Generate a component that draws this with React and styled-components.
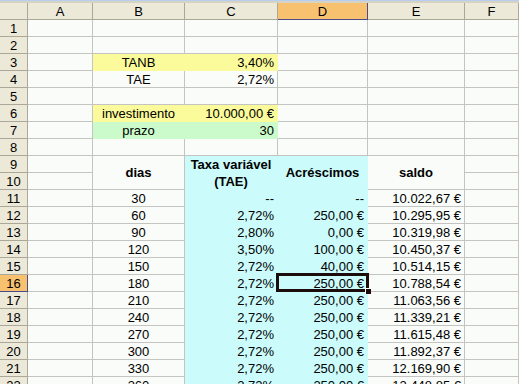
import React from 'react';
import styled, { createGlobalStyle, css } from 'styled-components';

const GlobalStyle = createGlobalStyle`
    html, body {
        margin: 0;
        padding: 0;
        background: #f9fcf9;
        overflow: hidden;
    }
`;

const Window = styled.div`
    width: 519px;
    height: 384px;
    overflow: hidden;
    font-family: 'Liberation Sans', Arial, sans-serif;
    font-size: 13px;
    color: #000;
    background: #f9fcf9;
`;

const TopStrip = styled.div`
    height: 3px;
    display: flex;
    background: #d6d3c4;
    border-top: 1px solid #b9cdee;
    box-sizing: border-box;
`;

const Sheet = styled.div`
    display: grid;
    grid-template-columns: 28px 65px 92px 93px 90px 97px 1fr;
    grid-auto-rows: 17px;
`;

const HeadCell = styled.div`
    box-sizing: border-box;
    display: flex;
    align-items: center;
    justify-content: center;
    background: ${(p) => (p.$selected ? '#f8c170' : '#ece9d8')};
    border-right: 1px solid ${(p) => (p.$selected ? '#4c4c8a' : '#aca899')};
    border-bottom: 1px solid ${(p) => (p.$selected ? '#4c4c8a' : '#aca899')};
    line-height: 16px;
    padding-top: 1px;
`;

const fills = {
    white: '#f9fcf9',
    yellow: '#fbfb9b',
    green: '#cbfbcb',
    cyan: '#cbfbfb',
};

const Cell = styled.div`
    position: relative;
    box-sizing: border-box;
    display: flex;
    align-items: center;
    justify-content: ${(p) =>
        p.$align === 'right' ? 'flex-end' : p.$align === 'center' ? 'center' : 'flex-start'};
    text-align: center;
    padding: 1px 3px 0;
    white-space: nowrap;
    line-height: 16px;
    background: ${(p) => fills[p.$fill || 'white']};
    border-right: 1px solid ${(p) => (p.$fill && p.$fill !== 'white' ? fills[p.$fill] : '#c4c4c0')};
    border-bottom: 1px solid ${(p) => (p.$fill && p.$fill !== 'white' ? fills[p.$fill] : '#c4c4c0')};
    font-weight: ${(p) => (p.$bold ? 'bold' : 'normal')};
    ${(p) => p.$span && css`grid-row: span ${p.$span};`}
    ${(p) =>
        p.$active &&
        css`
            z-index: 1;
            &::after {
                content: '';
                position: absolute;
                top: -2px;
                left: -2px;
                right: -2px;
                bottom: -1px;
                border: 3px solid #1c0c0c;
            }
            &::before {
                content: '';
                position: absolute;
                right: -4px;
                bottom: -3px;
                width: 5px;
                height: 5px;
                background: #1c0c0c;
                border: 1px solid #fff;
                border-right: none;
                border-bottom: none;
                z-index: 2;
            }
        `}
`;

const TwoLines = styled.span`
    white-space: normal;
    line-height: 17px;
`;

const columns = ['A', 'B', 'C', 'D', 'E', 'F'];

const series = [
    ['30', '--', '--', '10.022,67 €'],
    ['60', '2,72%', '250,00 €', '10.295,95 €'],
    ['90', '2,80%', '0,00 €', '10.319,98 €'],
    ['120', '3,50%', '100,00 €', '10.450,37 €'],
    ['150', '2,72%', '40,00 €', '10.514,15 €'],
    ['180', '2,72%', '250,00 €', '10.788,54 €'],
    ['210', '2,72%', '250,00 €', '11.063,56 €'],
    ['240', '2,72%', '250,00 €', '11.339,21 €'],
    ['270', '2,72%', '250,00 €', '11.615,48 €'],
    ['300', '2,72%', '250,00 €', '11.892,37 €'],
    ['330', '2,72%', '250,00 €', '12.169,90 €'],
    ['360', '2,72%', '250,00 €', '12.448,85 €'],
];

const Blank = () => <Cell />;

const InfoRow = ({ n, label, value, fill }) => (
    <>
        <HeadCell>{n}</HeadCell>
        <Blank />
        <Cell $align='center' $fill={fill}>{label}</Cell>
        <Cell $align='right' $fill={fill}>{value}</Cell>
        <Blank />
        <Blank />
        <Blank />
    </>
);

const EmptyRow = ({ n }) => (
    <>
        <HeadCell>{n}</HeadCell>
        {columns.map((c) => (
            <Blank key={c} />
        ))}
    </>
);

const App = () => {
    return (
        <Window>
            <GlobalStyle />
            <TopStrip />
            <Sheet>
                <HeadCell />
                {columns.map((c) => (
                    <HeadCell key={c} $selected={c === 'D'}>
                        {c}
                    </HeadCell>
                ))}

                <EmptyRow n={1} />
                <EmptyRow n={2} />
                <InfoRow n={3} label='TANB' value='3,40%' fill='yellow' />
                <InfoRow n={4} label='TAE' value='2,72%' />
                <EmptyRow n={5} />
                <InfoRow n={6} label='investimento' value='10.000,00 €' fill='yellow' />
                <InfoRow n={7} label='prazo' value='30' fill='green' />
                <EmptyRow n={8} />

                <HeadCell>9</HeadCell>
                <Blank />
                <Cell $span={2} $align='center' $bold>dias</Cell>
                <Cell $span={2} $align='center' $bold $fill='cyan'>
                    <TwoLines>
                        Taxa variável
                        <br />
                        (TAE)
                    </TwoLines>
                </Cell>
                <Cell $span={2} $align='center' $bold $fill='cyan'>Acréscimos</Cell>
                <Cell $span={2} $align='center' $bold>saldo</Cell>
                <Blank />
                <HeadCell>10</HeadCell>
                <Blank />
                <Blank />

                {series.map(([dias, taxa, acr, saldo], i) => {
                    const n = 11 + i;
                    const active = n === 16;
                    return (
                        <React.Fragment key={n}>
                            <HeadCell $selected={active}>{n}</HeadCell>
                            <Blank />
                            <Cell $align='center'>{dias}</Cell>
                            <Cell $align='right' $fill='cyan'>{taxa}</Cell>
                            <Cell $align='right' $fill='cyan' $active={active}>{acr}</Cell>
                            <Cell $align='right'>{saldo}</Cell>
                            <Blank />
                        </React.Fragment>
                    );
                })}
            </Sheet>
        </Window>
    );
};

export default App;
